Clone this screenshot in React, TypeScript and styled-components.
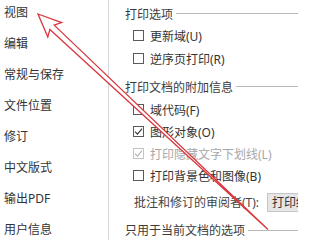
import React from "react";
import styled, { createGlobalStyle } from "styled-components";

const GlobalStyle = createGlobalStyle`
  html, body {
    margin: 0;
    padding: 0;
    background: #ffffff;
  }
  body {
    font-family: "Noto Sans", "Noto Sans CJK SC", sans-serif;
  }
`;

const navItems = [
  "视图",
  "编辑",
  "常规与保存",
  "文件位置",
  "修订",
  "中文版式",
  "输出PDF",
  "用户信息",
];

type Option = { label: string; checked?: boolean; disabled?: boolean };

const printOptions: Option[] = [{ label: "更新域(U)" }, { label: "逆序页打印(R)" }];

const extraOptions: Option[] = [
  { label: "域代码(F)" },
  { label: "图形对象(O)", checked: true },
  { label: "打印隐藏文字下划线(L)", checked: true, disabled: true },
  { label: "打印背景色和图像(B)" },
];

const App: React.FC = () => {
  return (
    <>
      <GlobalStyle />
      <Window>
        <Sidebar>
          <NavList>
            {navItems.map((item) => (
              <NavItem key={item}>{item}</NavItem>
            ))}
          </NavList>
        </Sidebar>
        <Content>
          <SectionTitle>
            <span>打印选项</span>
            <TitleRule />
          </SectionTitle>
          <OptionGroup $rowHeight={23} $top={1}>
            {printOptions.map((o) => (
              <CheckRow key={o.label} {...o} />
            ))}
          </OptionGroup>

          <SectionTitle $top={7}>
            <span>打印文档的附加信息</span>
            <TitleRule />
          </SectionTitle>
          <OptionGroup $rowHeight={22} $top={2}>
            {extraOptions.map((o) => (
              <CheckRow key={o.label} {...o} />
            ))}
          </OptionGroup>

          <ReviewerRow>
            <ReviewerLabel>批注和修订的审阅者(T):</ReviewerLabel>
            <Select>打印终稿</Select>
          </ReviewerRow>

          <SectionTitle $top={9}>
            <span>只用于当前文档的选项</span>
            <TitleRule />
          </SectionTitle>
        </Content>
        <Arrow />
      </Window>
    </>
  );
};

const CheckRow: React.FC<Option> = ({ label, checked, disabled }) => (
  <Row $disabled={disabled}>
    <Box $disabled={disabled}>
      {checked && (
        <svg width="9" height="9" viewBox="0 0 9 9">
          <path
            d="M1 4.6 L3.5 7.2 L8 1.6"
            fill="none"
            stroke="currentColor"
            strokeWidth="1.1"
          />
        </svg>
      )}
    </Box>
    <span>{label}</span>
  </Row>
);

const Arrow: React.FC = () => (
  <ArrowLayer width="320" height="240" viewBox="0 0 320 240">
    <polygon
      points="38,14 61.6,22.6 54.2,25.1 268,229.5 49.9,29.5 47.8,37.1"
      fill="#ffffff"
      stroke="#d9383f"
      strokeWidth="1.3"
      strokeLinejoin="miter"
    />
  </ArrowLayer>
);

const Window = styled.div`
  position: relative;
  width: 320px;
  height: 240px;
  overflow: hidden;
  display: flex;
  background: #ffffff;
  font-size: 12px;
  color: #333333;
`;

const Sidebar = styled.nav`
  width: 108px;
  flex-shrink: 0;
  border-right: 1px solid #d6d6d6;
  background: #ffffff;
`;

const NavList = styled.div`
  display: flex;
  flex-direction: column;
  margin-top: -4px;
  padding-left: 4px;
`;

const NavItem = styled.div`
  height: 31px;
  display: flex;
  align-items: center;
  font-size: 12px;
  color: #333333;
  white-space: nowrap;
`;

const Content = styled.main`
  width: 189px;
  flex-shrink: 0;
  overflow: hidden;
  padding: 4px 0 0 16px;
  box-sizing: border-box;
  display: flex;
  flex-direction: column;
`;

const SectionTitle = styled.div<{ $top?: number }>`
  height: 20px;
  margin-top: ${(p) => p.$top ?? 0}px;
  display: flex;
  align-items: center;
  gap: 3px;
  color: #3c3c3c;
  white-space: nowrap;
`;

const TitleRule = styled.div`
  flex: 1;
  height: 1px;
  background: #b8b8b8;
`;

const OptionGroup = styled.div<{ $rowHeight: number; $top: number }>`
  display: grid;
  grid-auto-rows: ${(p) => p.$rowHeight}px;
  margin-top: ${(p) => p.$top}px;
  padding-left: 8px;
`;

const Row = styled.div<{ $disabled?: boolean }>`
  display: flex;
  align-items: center;
  gap: 6px;
  white-space: nowrap;
  color: ${(p) => (p.$disabled ? "#a8a8a8" : "#333333")};
`;

const Box = styled.span<{ $disabled?: boolean }>`
  width: 11px;
  height: 11px;
  box-sizing: border-box;
  border: 1px solid ${(p) => (p.$disabled ? "#c4c4c4" : "#5a5a5a")};
  background: #ffffff;
  display: flex;
  align-items: center;
  justify-content: center;
  flex-shrink: 0;
  color: ${(p) => (p.$disabled ? "#b4b4b4" : "#333333")};
`;

const ReviewerRow = styled.div`
  height: 19px;
  margin-top: 6px;
  padding-left: 9px;
  display: flex;
  align-items: center;
  white-space: nowrap;
`;

const ReviewerLabel = styled.span`
  width: 133px;
  flex-shrink: 0;
  color: #444444;
`;

const Select = styled.div`
  height: 19px;
  box-sizing: border-box;
  padding: 0 4px;
  display: flex;
  align-items: center;
  flex-shrink: 0;
  background: #e6e6e6;
  border: 1px solid #c6c6c6;
  color: #333333;
`;

const ArrowLayer = styled.svg`
  position: absolute;
  left: 0;
  top: 0;
  pointer-events: none;
`;

export default App;
